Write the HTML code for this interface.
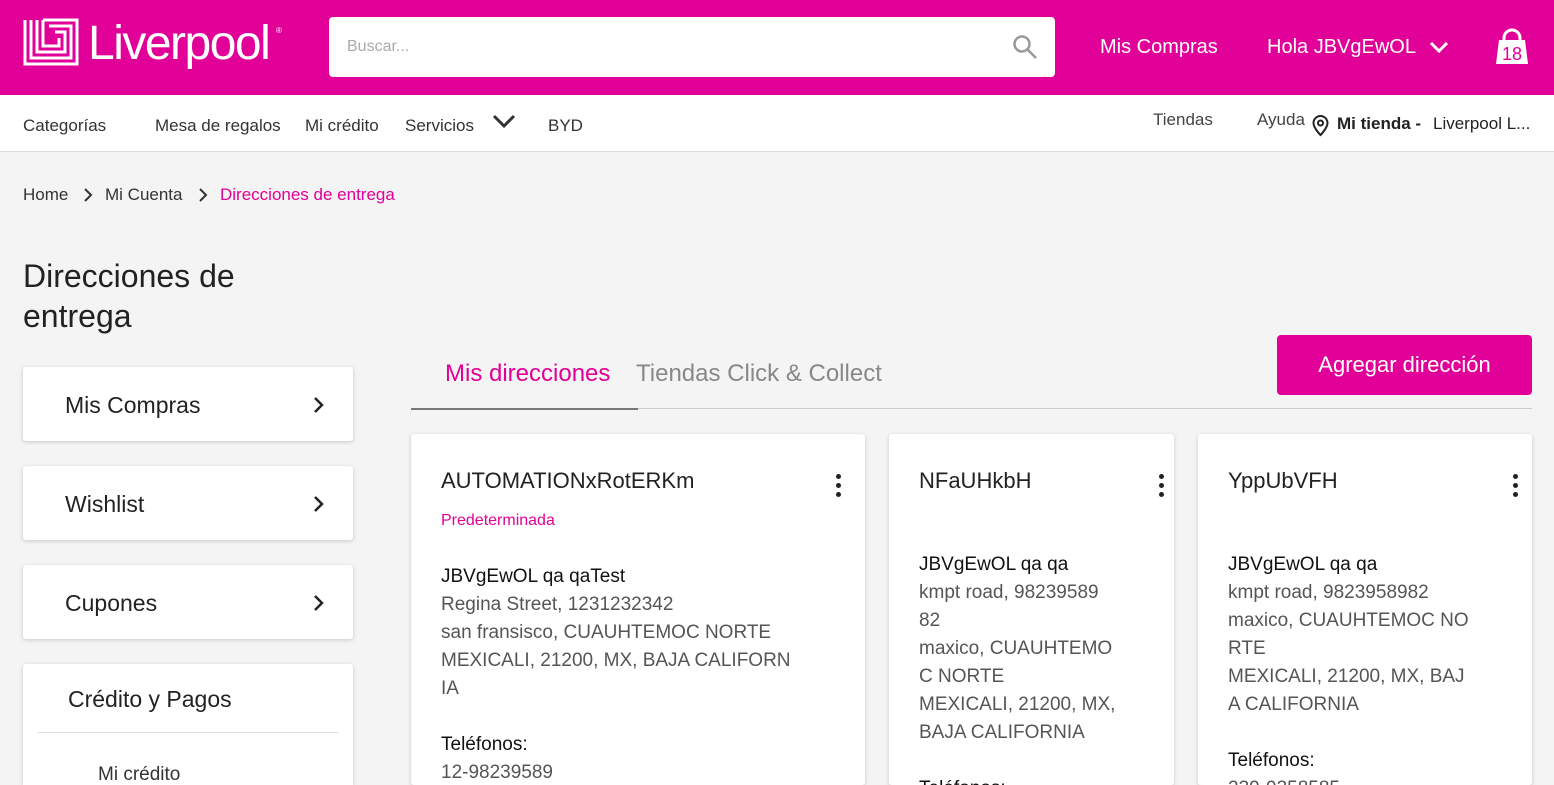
<!DOCTYPE html>
<html><head><meta charset="utf-8"><style>
*{box-sizing:border-box;margin:0;padding:0}
html,body{width:1554px;height:785px;overflow:hidden}
body{background:#f4f4f4;font-family:"Liberation Sans",Arial,sans-serif;color:#333;position:relative}
.a{position:absolute;white-space:nowrap}
.hdr{position:absolute;left:0;top:0;width:1554px;height:95px;background:#e10098}
.nav{position:absolute;left:0;top:95px;width:1554px;height:57px;background:#fff;border-bottom:1px solid #ddd}
.card{position:absolute;background:#fff;box-shadow:0 1px 4px rgba(0,0,0,.18);border-radius:3px;overflow:hidden}
.side{font-size:23px;color:#222}
.addr{font-size:19px;color:#555;line-height:28px;white-space:normal}
.addr b{font-weight:normal;color:#111}
.dots{position:absolute;width:5px}
.dots i{display:block;width:5px;height:5px;border-radius:50%;background:#222;margin-bottom:4px}
</style></head><body>
<div class="hdr">
<svg class="a" style="left:23px;top:18px" width="56" height="48" viewBox="0 0 56 48" fill="none" stroke="#fff" stroke-width="3">
<path d="M2 2v44h52V2H20"/><path d="M8 2v38h40V8H26"/><path d="M14 2v32h28V14H32"/><path d="M20 2v26h16V20"/></svg>
<div class="a" style="left:88px;top:16px;font-size:48px;color:#fff;letter-spacing:-1.5px">Liverpool</div>
<div class="a" style="left:276px;top:26px;font-size:8px;color:#fff">®</div>
<div class="a" style="left:329px;top:17px;width:726px;height:60px;background:#fff;border-radius:4px"></div>
<div class="a" style="left:347px;top:38px;font-size:16px;color:#aaa">Buscar...</div>
<svg class="a" style="left:1012px;top:34px" width="26" height="26" viewBox="0 0 26 26" fill="none" stroke="#999" stroke-width="2.5"><circle cx="10" cy="10" r="7.5"/><path d="M16 16l8 8"/></svg>
<div class="a" style="left:1100px;top:36px;font-size:20px;color:#fff">Mis Compras</div>
<div class="a" style="left:1267px;top:36px;font-size:20px;color:#fff">Hola JBVgEwOL</div>
<svg class="a" style="left:1429px;top:40px" width="20" height="14" viewBox="0 0 20 14" fill="none" stroke="#fff" stroke-width="3"><path d="M2 3l8 8 8-8"/></svg>
<svg class="a" style="left:1495px;top:28px" width="34" height="38" viewBox="0 0 34 38"><path d="M9 14V10a8 8 0 0116 0v4" fill="none" stroke="#fff" stroke-width="3"/><path d="M4 12h26l3 24H1z" fill="#fff"/><text x="17" y="32" text-anchor="middle" font-size="18" font-family="Liberation Sans" fill="#e10098">18</text></svg>
</div>
<div class="nav">
<div class="a" style="left:23px;top:21px;font-size:17px;color:#333">Categorías</div>
<div class="a" style="left:155px;top:21px;font-size:17px;color:#333">Mesa de regalos</div>
<div class="a" style="left:305px;top:21px;font-size:17px;color:#333">Mi crédito</div>
<div class="a" style="left:405px;top:21px;font-size:17px;color:#333">Servicios</div>
<svg class="a" style="left:492px;top:18px" width="24" height="16" viewBox="0 0 24 16" fill="none" stroke="#333" stroke-width="3"><path d="M2 3l10 10 10-10"/></svg>
<div class="a" style="left:548px;top:21px;font-size:17px;color:#333">BYD</div>
<div class="a" style="left:1153px;top:15px;font-size:17px;color:#444">Tiendas</div>
<div class="a" style="left:1257px;top:15px;font-size:17px;color:#444">Ayuda</div>
<svg class="a" style="left:1312px;top:20px" width="17" height="22" viewBox="0 0 17 22" fill="none" stroke="#222" stroke-width="2"><path d="M8.5 20s-7-7-7-12a7 7 0 0114 0c0 5-7 12-7 12z"/><circle cx="8.5" cy="8" r="2.5"/></svg>
<div class="a" style="left:1337px;top:19px;font-size:17px;color:#222;font-weight:bold">Mi tienda -</div>
<div class="a" style="left:1433px;top:19px;font-size:17px;color:#222">Liverpool L...</div>
</div>
<div class="a" style="left:23px;top:185px;font-size:17px;color:#333">Home</div>
<svg class="a" style="left:83px;top:188px" width="10" height="14" viewBox="0 0 10 14" fill="none" stroke="#333" stroke-width="2"><path d="M2 1l6 6-6 6"/></svg>
<div class="a" style="left:105px;top:185px;font-size:17px;color:#333">Mi Cuenta</div>
<svg class="a" style="left:198px;top:188px" width="10" height="14" viewBox="0 0 10 14" fill="none" stroke="#333" stroke-width="2"><path d="M2 1l6 6-6 6"/></svg>
<div class="a" style="left:220px;top:185px;font-size:17px;color:#e10098">Direcciones de entrega</div>
<div class="a" style="left:23px;top:256px;font-size:32px;color:#222;line-height:40px">Direcciones de<br>entrega</div>
<div class="card" style="left:23px;top:367px;width:330px;height:74px"><div class="a side" style="left:42px;top:25px">Mis Compras</div><svg class="a" style="left:290px;top:29px" width="12" height="18" viewBox="0 0 12 18" fill="none" stroke="#222" stroke-width="2.5"><path d="M2 2l7 7-7 7"/></svg></div>
<div class="card" style="left:23px;top:466px;width:330px;height:74px"><div class="a side" style="left:42px;top:25px">Wishlist</div><svg class="a" style="left:290px;top:29px" width="12" height="18" viewBox="0 0 12 18" fill="none" stroke="#222" stroke-width="2.5"><path d="M2 2l7 7-7 7"/></svg></div>
<div class="card" style="left:23px;top:565px;width:330px;height:74px"><div class="a side" style="left:42px;top:25px">Cupones</div><svg class="a" style="left:290px;top:29px" width="12" height="18" viewBox="0 0 12 18" fill="none" stroke="#222" stroke-width="2.5"><path d="M2 2l7 7-7 7"/></svg></div>
<div class="card" style="left:23px;top:664px;width:330px;height:121px;border-radius:3px 3px 0 0"><div class="a side" style="left:45px;top:22px">Crédito y Pagos</div><div class="a" style="left:15px;top:68px;width:300px;height:1px;background:#ddd"></div><div class="a" style="left:75px;top:100px;font-size:19px;color:#333">Mi crédito</div></div>
<div class="a" style="left:445px;top:360px;font-size:24px;color:#e10098">Mis direcciones</div>
<div class="a" style="left:636px;top:360px;font-size:24px;color:#888">Tiendas Click &amp; Collect</div>
<div class="a" style="left:411px;top:408px;width:1121px;height:1px;background:#ccc"></div>
<div class="a" style="left:411px;top:408px;width:227px;height:2px;background:#777"></div>
<div class="a" style="left:1277px;top:335px;width:255px;height:60px;background:#e10098;border-radius:4px;color:#fff;font-size:22px;text-align:center;line-height:60px">Agregar dirección</div>
<div class="card" style="left:411px;top:434px;width:454px;height:351px">
<div class="a" style="left:30px;top:34px;font-size:22px;color:#222">AUTOMATIONxRotERKm</div>
<div class="dots" style="left:425px;top:40px"><i></i><i></i><i></i></div>
<div class="a" style="left:30px;top:78px;font-size:16px;color:#e10098">Predeterminada</div>
<div class="a addr" style="left:30px;top:129px;width:370px"><b>JBVgEwOL qa qaTest</b><br>Regina Street, 1231232342<br>san fransisco, CUAUHTEMOC NORTE<br>MEXICALI, 21200, MX, BAJA CALIFORN<br>IA<br><br><b>Teléfonos:</b><br>12-98239589</div>
</div>
<div class="card" style="left:889px;top:434px;width:285px;height:351px">
<div class="a" style="left:30px;top:34px;font-size:22px;color:#222">NFaUHkbH</div>
<div class="dots" style="left:270px;top:40px"><i></i><i></i><i></i></div>
<div class="a addr" style="left:30px;top:117px;width:210px"><b>JBVgEwOL qa qa</b><br>kmpt road, 98239589<br>82<br>maxico, CUAUHTEMO<br>C NORTE<br>MEXICALI, 21200, MX,<br>BAJA CALIFORNIA<br><br><b>Teléfonos:</b></div>
</div>
<div class="card" style="left:1198px;top:434px;width:334px;height:351px">
<div class="a" style="left:30px;top:34px;font-size:22px;color:#222">YppUbVFH</div>
<div class="dots" style="left:315px;top:40px"><i></i><i></i><i></i></div>
<div class="a addr" style="left:30px;top:117px;width:260px"><b>JBVgEwOL qa qa</b><br>kmpt road, 9823958982<br>maxico, CUAUHTEMOC NO<br>RTE<br>MEXICALI, 21200, MX, BAJ<br>A CALIFORNIA<br><br><b>Teléfonos:</b><br>239-9358585</div>
</div>
</body></html>
